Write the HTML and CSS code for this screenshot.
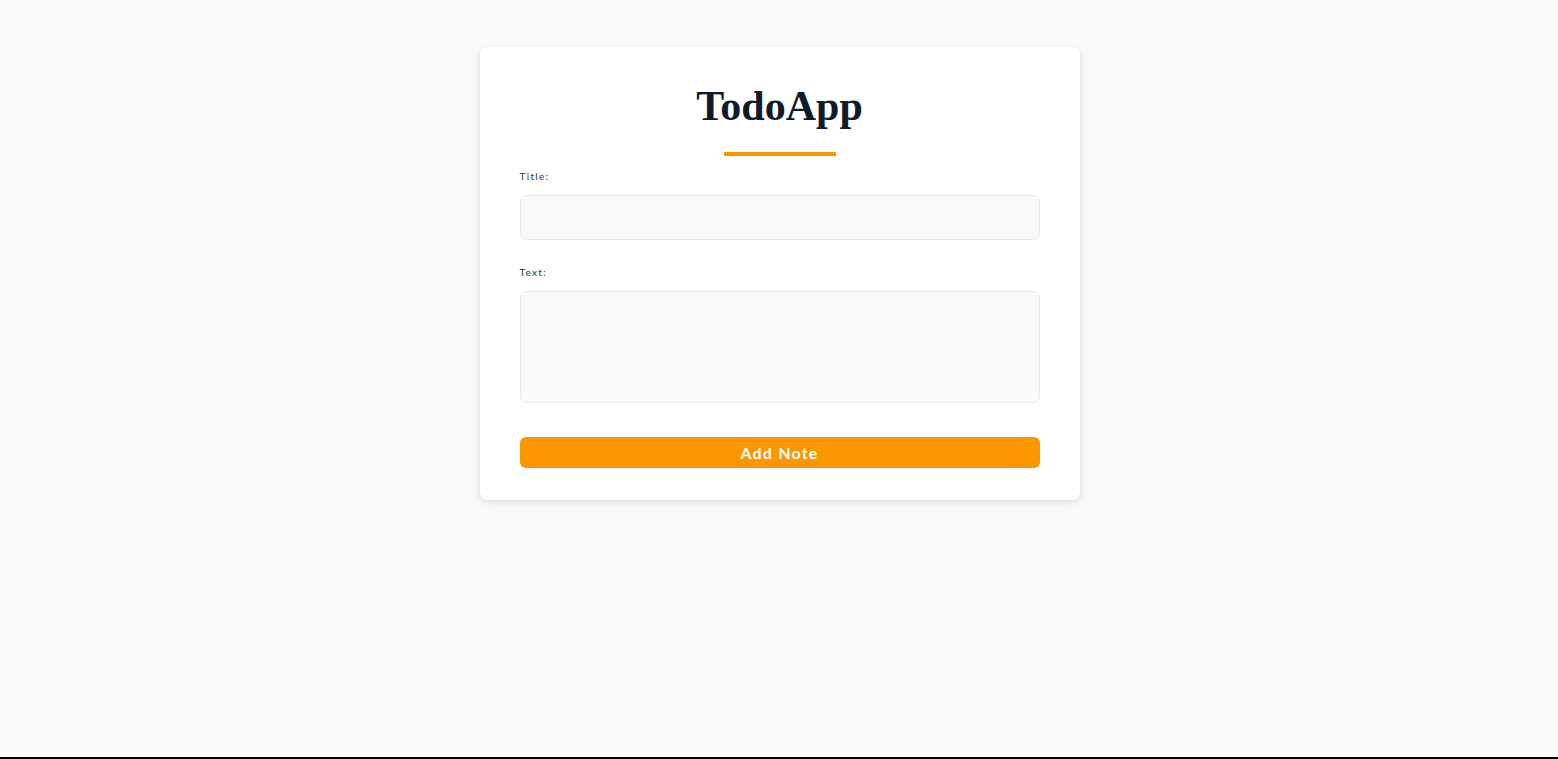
FILE: index.html
```html
<!DOCTYPE html>
<html>
<head>
<meta charset="utf-8">
<link rel="stylesheet" href="styles.css">
</head>
<body>
<main class="page">
  <section class="card">
    <h1 class="title">TodoApp</h1>
    <div class="underline"></div>
    <form class="form">
      <label class="label" for="t">Title:</label>
      <input class="input" id="t" type="text">
      <label class="label label-text" for="x">Text:</label>
      <textarea class="textarea" id="x"></textarea>
      <button class="button" type="button">Add Note</button>
    </form>
  </section>
</main>
</body>
</html>
```
FILE: styles.css
```css
html { background: #000; margin: 0; padding: 0; }
body { margin: 0; height: 757px; background: #f9f9fa; font-family: Lato, "Noto Sans", sans-serif; }
.page { display: flex; justify-content: center; padding: 47px 0 0 1px; }
.card {
  width: 600px; box-sizing: border-box; background: #fff; border-radius: 8px;
  box-shadow: 0 2px 6px rgba(0,0,0,0.12); padding: 40px 40px 32px;
  display: flex; flex-direction: column; align-items: stretch;
}
.title {
  margin: 0; text-align: center; font-family: "Liberation Serif", serif; font-weight: 700;
  font-size: 42px; line-height: 38px; color: #0f1a2a; letter-spacing: 0;
}
.underline { width: 112px; height: 4px; background: #fb9800; margin: 27px auto 0; }
.form { display: flex; flex-direction: column; }
.label { font-size: 10px; letter-spacing: 1.3px; color: #333; margin-top: 14px; line-height: 12px; font-weight: 400; }
.label-text { margin-top: 26px; }
.input, .textarea {
  margin-top: 13px; box-sizing: border-box; width: 100%; background: #f9fafb;
  border: 1px solid #e5e7eb; border-radius: 7px; font: inherit; outline: none;
}
.input { height: 45px; }
.textarea { height: 112px; resize: none; }
.button {
  margin-top: 34px; height: 31px; border: none; border-radius: 6px; background: #fb9800;
  color: #fff; font-family: Lato, sans-serif; font-weight: 700; font-size: 16px; letter-spacing: 1.2px;
  padding: 0; cursor: pointer;
}
```
